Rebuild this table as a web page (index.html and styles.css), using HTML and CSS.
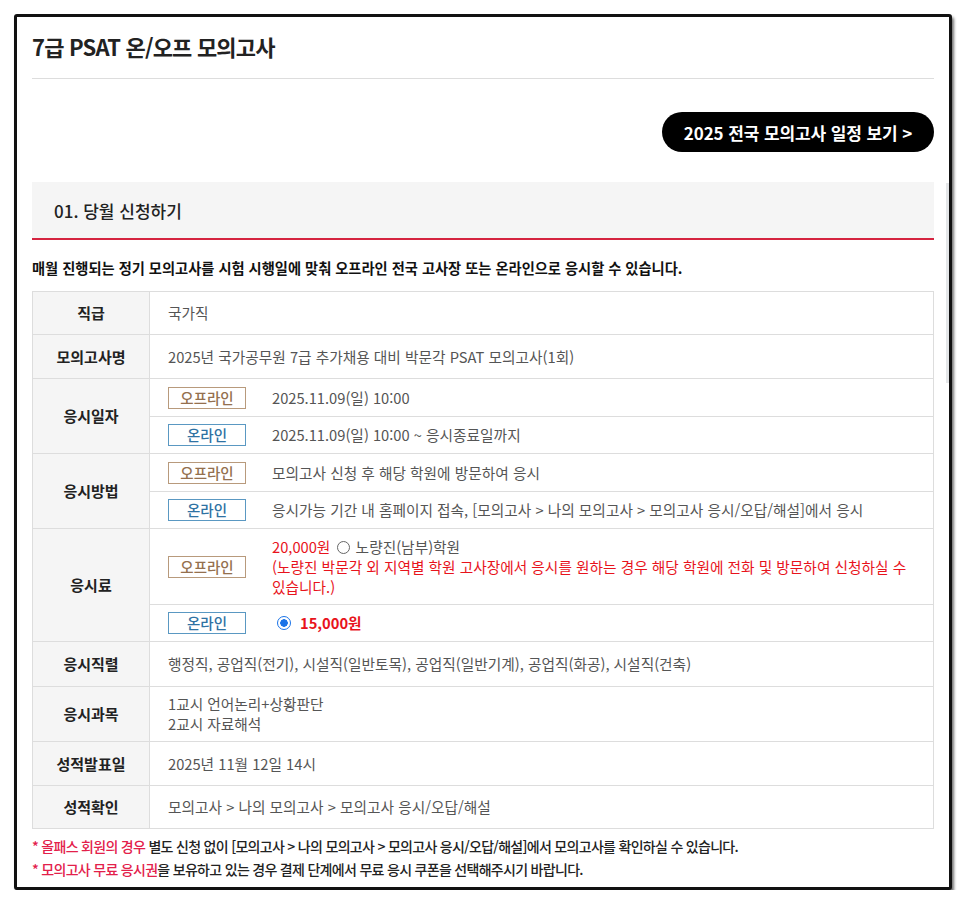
FILE: index.html
```html
<!DOCTYPE html>
<html lang="ko">
<head>
<meta charset="utf-8">
<title>7급 PSAT 온/오프 모의고사</title>
<link rel="stylesheet" href="styles.css">
</head>
<body>
<div class="frame">
  <div class="scroll-thumb"></div>
  <h1 class="page-title">7급 PSAT 온/오프 모의고사</h1>
  <div class="btn-row">
    <a class="schedule-btn" href="#">2025 전국 모의고사 일정 보기 &gt;</a>
  </div>
  <div class="section-head">01. 당월 신청하기</div>
  <p class="desc">매월 진행되는 정기 모의고사를 시험 시행일에 맞춰 오프라인 전국 고사장 또는 온라인으로 응시할 수 있습니다.</p>
  <table class="info">
    <tr class="r43">
      <th>직급</th>
      <td>국가직</td>
    </tr>
    <tr class="r44">
      <th>모의고사명</th>
      <td>2025년 국가공무원 7급 추가채용 대비 박문각 PSAT 모의고사(1회)</td>
    </tr>
    <tr class="r38">
      <th rowspan="2">응시일자</th>
      <td><div class="sub"><span class="badge off">오프라인</span><span>2025.11.09(일) 10:00</span></div></td>
    </tr>
    <tr class="r37">
      <td><div class="sub"><span class="badge on">온라인</span><span>2025.11.09(일) 10:00 ~ 응시종료일까지</span></div></td>
    </tr>
    <tr class="r38">
      <th rowspan="2">응시방법</th>
      <td><div class="sub"><span class="badge off">오프라인</span><span>모의고사 신청 후 해당 학원에 방문하여 응시</span></div></td>
    </tr>
    <tr class="r37">
      <td><div class="sub"><span class="badge on">온라인</span><span>응시가능 기간 내 홈페이지 접속, [모의고사 &gt; 나의 모의고사 &gt; 모의고사 응시/오답/해설]에서 응시</span></div></td>
    </tr>
    <tr class="r76">
      <th rowspan="2">응시료</th>
      <td><div class="sub"><span class="badge off">오프라인</span><span class="fee-text"><span class="red">20,000원</span> <span class="radio"></span> 노량진(남부)학원<br><span class="red">(노량진 박문각 외 지역별 학원 고사장에서 응시를 원하는 경우 해당 학원에 전화 및 방문하여 신청하실 수 있습니다.)</span></span></div></td>
    </tr>
    <tr class="r37">
      <td><div class="sub"><span class="badge on">온라인</span><span class="radio checked"></span><span class="red strong">15,000원</span></div></td>
    </tr>
    <tr class="r45">
      <th>응시직렬</th>
      <td>행정직, 공업직(전기), 시설직(일반토목), 공업직(일반기계), 공업직(화공), 시설직(건축)</td>
    </tr>
    <tr class="r55">
      <th>응시과목</th>
      <td>1교시 언어논리+상황판단<br>2교시 자료해석</td>
    </tr>
    <tr class="r44">
      <th>성적발표일</th>
      <td>2025년 11월 12일 14시</td>
    </tr>
    <tr class="r43">
      <th>성적확인</th>
      <td>모의고사 &gt; 나의 모의고사 &gt; 모의고사 응시/오답/해설</td>
    </tr>
  </table>
  <ul class="notes">
    <li><span class="pink">* 올패스 회원의 경우</span> 별도 신청 없이 [모의고사 &gt; 나의 모의고사 &gt; 모의고사 응시/오답/해설]에서 모의고사를 확인하실 수 있습니다.</li>
    <li><span class="pink">* 모의고사 무료 응시권</span>을 보유하고 있는 경우 결제 단계에서 무료 응시 쿠폰을 선택해주시기 바랍니다.</li>
  </ul>
</div>
</body>
</html>
```
FILE: styles.css
```css
* { box-sizing: border-box; }
html, body { margin: 0; padding: 0; background: #fff; }
body {
  font-family: "Noto Sans CJK KR", "Noto Sans", sans-serif;
  color: #444;
  font-size: 14px;
  word-break: keep-all;
}
.frame {
  position: relative;
  margin: 14px 0 0 14px;
  width: 938px;
  height: 876px;
  border: 3px solid #111;
  border-radius: 3px;
  box-shadow: 2px 3px 3px rgba(0,0,0,0.55);
  padding: 0 15px;
  background: #fff;
  overflow: hidden;
}
.scroll-thumb {
  position: absolute;
  right: 0;
  top: 166px;
  width: 3px;
  height: 200px;
  background: #e4e6e8;
}
.page-title {
  margin: 0;
  padding: 14px 0 0;
  height: 62px;
  font-size: 22px;
  line-height: 30px;
  font-weight: 700;
  color: #222;
  letter-spacing: -0.8px;
  border-bottom: 1px solid #ddd;
}
.btn-row {
  display: flex;
  justify-content: flex-end;
  padding: 33px 0 30px;
}
.schedule-btn {
  display: inline-flex;
  align-items: center;
  justify-content: center;
  height: 40px;
  width: 272px;
  border-radius: 20px;
  background: #000;
  color: #fff;
  text-decoration: none;
  font-size: 17px;
  font-weight: 700;
  letter-spacing: -0.1px;
}
.section-head {
  height: 58px;
  background: #f5f5f5;
  border-bottom: 2px solid #d52440;
  padding: 0 22px;
  display: flex;
  align-items: center;
  font-size: 17px;
  font-weight: 500;
  color: #222;
}
.desc {
  margin: 0;
  padding: 18px 0 0;
  height: 51px;
  font-size: 14.25px;
  line-height: 20px;
  font-weight: 700;
  color: #111;
  letter-spacing: 0;
}
.info {
  width: 100%;
  border-collapse: collapse;
  border: 1px solid #ddd;
  table-layout: fixed;
}
.info th, .info td {
  border: 1px solid #ddd;
  font-size: 14.7px;
  line-height: 20px;
  vertical-align: middle;
}
.info th {
  width: 117px;
  background: #f5f5f5;
  color: #222;
  font-weight: 700;
  font-size: 15px;
  text-align: center;
  padding: 0;
}
.info td {
  padding: 0 18px;
  color: #555;
}
.r43 { height: 43px; }
.r44 { height: 44px; }
.r45 { height: 45px; }
.r55 { height: 55px; }
.r38 { height: 38px; }
.r37 { height: 37px; }
.r76 { height: 76px; }
.sub {
  display: flex;
  align-items: center;
}
.badge {
  flex: none;
  width: 78px;
  height: 22px;
  line-height: 20px;
  border: 1px solid;
  text-align: center;
  font-size: 14.5px;
  font-weight: 500;
  margin-right: 26px;
}
.badge.off { border-color: #b89a7c; color: #94704e; }
.badge.on { border-color: #5a98c2; color: #2f72a3; }
.red { color: #e8131c; }
.strong { font-weight: 700; }
.radio {
  display: inline-block;
  width: 13px;
  height: 13px;
  border: 1px solid #666;
  border-radius: 50%;
  vertical-align: -1px;
  margin: 0 2px;
}
.radio.checked {
  width: 14px;
  height: 14px;
  border: 1.5px solid #1a73e8;
  background: radial-gradient(circle, #1a73e8 0 3.5px, #fff 4px);
  margin: 0 9px 0 5px;
}
.notes {
  list-style: none;
  margin: 0;
  padding: 6px 0 0;
}
.notes li {
  font-size: 14px;
  line-height: 23px;
  font-weight: 500;
  color: #222;
  letter-spacing: -0.7px;
}
.pink { color: #e3204a; }
```
